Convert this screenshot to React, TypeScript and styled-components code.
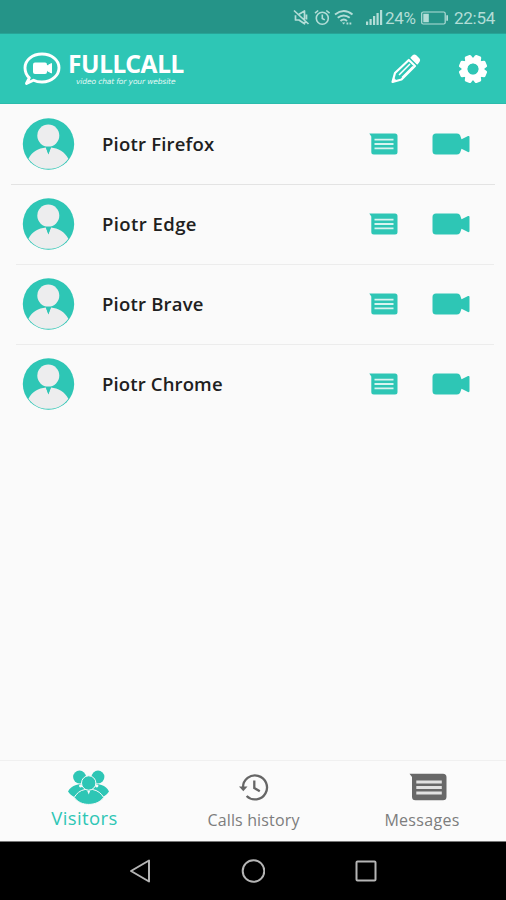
import React from "react";
import styled, { createGlobalStyle } from "styled-components";

const TEAL = "#2ec6b5";
const PAPER = "#fafafa";

const GlobalStyle = createGlobalStyle`
  * { box-sizing: border-box; }
  body { margin: 0; background: #000; }
  svg { display: block; flex: none; }
`;

const Screen = styled.div`
  display: flex;
  flex-direction: column;
  width: 506px;
  height: 900px;
  overflow: hidden;
  background: ${PAPER};
  font-family: "Open Sans", "Noto Sans", sans-serif;
`;

const StatusBar = styled.div`
  display: flex;
  align-items: center;
  height: 34px;
  padding: 2px 0 0 293px;
  background: #259488;
  color: #b3ddd7;
  border-bottom: 1px solid #27a497;
`;

const StatusItem = styled.span<{ $width: number }>`
  display: flex;
  width: ${(p) => p.$width}px;
  flex: none;
  font: 400 17px/20px Roboto, sans-serif;
  letter-spacing: -0.25px;
  white-space: nowrap;
`;

const Header = styled.header`
  display: flex;
  align-items: center;
  height: 70px;
  padding: 0 17px 0 22px;
  background: ${TEAL};
  border-bottom: 1px solid #2bbcac;
  color: #fff;
`;

const Brand = styled.div`
  display: flex;
  flex-direction: column;
  width: 130px;
  margin-left: 5px;
`;

const BrandName = styled.div`
  font: 700 24.5px/25px "Noto Sans", sans-serif;
  height: 25px;
  letter-spacing: -0.4px;
  white-space: nowrap;
`;

const Tagline = styled.div`
  padding-left: 8px;
  margin-top: 1px;
  font: italic 400 7.5px/9px "DejaVu Sans", sans-serif;
  letter-spacing: -0.12px;
  white-space: nowrap;
  color: #e4f9f6;
`;

const HeaderActions = styled.div`
  display: flex;
  align-items: center;
  gap: 36px;
  margin-left: auto;
`;

const VisitorList = styled.ul`
  flex: 1;
  margin: 0;
  padding: 0;
  list-style: none;
`;

const VisitorRow = styled.li`
  height: 80px;
  &:not(:last-child)::after {
    content: "";
    display: block;
    height: 1px;
    margin: 0 12px 0 16px;
    background: #ececec;
  }
  &:first-child::after {
    margin: 0 11px 0 11px;
    background: #e3e3e3;
  }
`;

const RowContent = styled.div`
  display: flex;
  align-items: center;
  height: 80px;
  padding: 0 36px 0 22px;
`;

const VisitorName = styled.div<{ $tracking: number }>`
  flex: 1;
  margin-left: 27px;
  color: #202020;
  font-weight: 600;
  font-size: 18.5px;
  line-height: 26px;
  letter-spacing: ${(p) => p.$tracking}px;
`;

const RowActions = styled.div`
  display: flex;
  align-items: center;
  gap: 34px;
`;

const TabBar = styled.nav`
  display: grid;
  grid-template-columns: 169px 169px 168px;
  height: 82px;
  background: #fbfbfb;
  border-top: 1px solid #f0f0f0;
  border-bottom: 1px solid #777;
`;

const Tab = styled.div<{ $active?: boolean }>`
  display: flex;
  flex-direction: column;
  align-items: center;
  color: ${(p) => (p.$active ? TEAL : "#666")};
`;

const TabIcon = styled.div<{ $indent?: number }>`
  display: flex;
  align-items: center;
  height: 36px;
  margin-top: 8px;
  padding-left: ${(p) => p.$indent ?? 0}px;
`;

const TabLabel = styled.div<{ $size: number; $tracking: number; $active?: boolean }>`
  font-size: ${(p) => p.$size}px;
  line-height: 24px;
  letter-spacing: ${(p) => p.$tracking}px;
  margin-top: ${(p) => (p.$active ? 1 : 3)}px;
  color: ${(p) => (p.$active ? TEAL : "#7d7d7d")};
  white-space: nowrap;
`;

const SystemNav = styled.div`
  display: grid;
  grid-template-columns: 22px 24px 22px;
  justify-content: center;
  align-items: center;
  column-gap: 90px;
  height: 58px;
  background: #000;
`;

const LogoMark = () => (
  <svg width="41" height="36" viewBox="0 0 41 36">
    <path d="M20 3C29.8 3 37 9.2 37 16.7S29.8 31 20 31c-3.200 0-6-.5-8.500-1.700L4.500 32.500l2.800-5.700C4.400 24.100 3 20.800 3 16.700 3 9.200 10.200 3 20 3z" fill="none" stroke="#fff" strokeWidth="2.900" strokeLinejoin="round" />
    <rect x="11" y="11.500" width="14" height="11.500" rx="2" fill="#fff" />
    <path d="M24 15.500l5.500-3v9.500l-5.500-3z" fill="#fff" stroke="#fff" strokeLinejoin="round" />
  </svg>
);

const PencilIcon = () => (
  <svg width="30" height="32" viewBox="0 0 30 32" fill="none" stroke="#fff" strokeLinejoin="round">
    <g transform="translate(0 .5)">
      <path d="M1.500 28.500l2.500-9L17.800 6.500l6.200 6L10.500 26z" strokeWidth="2.200" />
      <path d="M8 21.500L19 10.500M11 24L22 13" strokeWidth="1.500" />
      <path d="M20.200 4.200l2-2q1.300-1 2.600.2l3 2.800q1.100 1.200.2 2.600l-1.800 2.400z" fill="#fff" strokeWidth="1.500" />
      <path d="M1.500 28.500l1-4 3 2.900z" fill="#fff" />
    </g>
  </svg>
);

const GearIcon = () => (
  <svg width="32" height="32" viewBox="-16 -16 32 32">
    <g fill="#fff">
      {[0, 45, 90, 135, 180, 225, 270, 315].map((angle) => (
        <path key={angle} transform={`rotate(${angle + 22.5})`} d="M-4.700-8L-3.400-13.300q.4-1 1.400-1h4q1 0 1.400 1L4.700-8z" />
      ))}
    </g>
    <circle r="8.300" fill="none" stroke="#fff" strokeWidth="6" />
    <circle r="5.500" fill={TEAL} />
  </svg>
);

const Avatar = () => (
  <svg width="53" height="53" viewBox="0 0 53 53">
    <circle cx="26.500" cy="26" r="25.700" fill={TEAL} />
    <circle cx="26.300" cy="17.600" r="11" fill="#ededee" />
    <path d="M6.500 40.700C10 33.500 16.500 30.200 23.800 29.400l2.600 6.500 2.600-6.500c7 .8 14 4.300 17.300 11.300C42 47.300 34.800 50.800 26.500 50.800S11 47.300 6.500 40.700z" fill="#ededee" />
    <path d="M24 29.400h4.800l-1 3-1.400 4-1.400-4z" fill={TEAL} />
  </svg>
);

const MessageIcon = () => (
  <svg width="29" height="22" viewBox="0 0 29 22">
    <path d="M.3.500H26q2.500 0 2.500 2.500v16q0 2.500-2.500 2.500H4.800q-2.500 0-2.500-2.500V3.500z" fill={TEAL} />
    <path d="M5.500 6.600h19M5.500 11h19M5.500 15.400h19" stroke="#d8f4f0" strokeWidth="1.800" />
  </svg>
);

const VideoIcon = () => (
  <svg width="38" height="22" viewBox="0 0 38 22" fill={TEAL}>
    <path d="M4 .5h21q2.500 0 3.200 2l1.300 3.700L36 3q1.500-.5 1.500 1v14q0 1.500-1.500 1L29.500 15.800 28.200 19.500q-.7 2-3.200 2H4Q.5 21.500.5 18V4Q.5.500 4 .5z" />
  </svg>
);

const VisitorsIcon = () => (
  <svg width="43" height="35" viewBox="0 0 43 35" fill={TEAL}>
    <circle cx="12.500" cy="7" r="6.400" />
    <circle cx="31" cy="7" r="6.400" />
    <path d="M9 15l6-1.500h13.500l6 1.500c3.500 1 6 3.500 7.500 6.500-2.500 3.500-5.500 5.700-9.500 7L21.700 24l-11.200 4.500C6.500 27.200 3.500 25 1 21.500 2.500 18.500 5.500 16 9 15z" />
    <g stroke={PAPER} strokeWidth="1">
      <path d="M18 19.500h7.500c5 .8 9 4 11.200 8-3.500 4.700-9 6.900-15 6.900s-11-2.200-14.500-6.900c2.200-4 5.800-7.200 10.800-8z" />
      <circle cx="21.700" cy="13" r="7.200" />
    </g>
    <path d="M20.200 20.800h3l-1.500 3.700z" fill={PAPER} />
    <circle cx="13.600" cy="15.800" r="1.600" fill={PAPER} />
    <circle cx="29.800" cy="15.800" r="1.600" fill={PAPER} />
  </svg>
);

const HistoryIcon = () => (
  <svg width="30" height="28" viewBox="0 0 30 28" fill="none" stroke="#666" strokeWidth="2.300">
    <path d="M4 14.500a12 12 0 1 1 3.600 8.500" />
    <path d="M0 13.500h8.500l-4.200 4.700z" fill="#666" stroke="none" />
    <path d="M15.300 7.500v7.500l5.500 3.300" />
  </svg>
);

const MessagesTabIcon = () => (
  <svg width="38" height="28" viewBox="0 0 38 28">
    <path d="M.5.700H34q3.500 0 3.500 3.500v19.600q0 3.500-3.500 3.500H6.500Q3 27.300 3 23.800V4z" fill="#686868" />
    <path d="M7.300 9h25.500M7.300 14.500h25.500M7.300 20h25.500" stroke="#e2e2e2" strokeWidth="3" />
  </svg>
);

const MuteIcon = () => (
  <svg width="17" height="17" viewBox="0 0 17 17" fill="none" stroke="currentColor" strokeWidth="1.700" strokeLinejoin="round">
    <path d="M6 5.200L11.500 2v8.500M11.500 12.800v2L6 11H2.500V6.200M1 1.500l14.500 13.500M13.500 5.500v5" />
  </svg>
);

const AlarmIcon = () => (
  <svg width="17" height="17" viewBox="0 0 17 17" fill="none" stroke="currentColor" strokeWidth="1.600">
    <circle cx="8.300" cy="9.200" r="6" />
    <path d="M8.300 5.500v4l2.500 1.400M1 4.200l3.200-2.700M12.300 1.500l3.300 2.700" />
  </svg>
);

const WifiIcon = () => (
  <svg width="20" height="17" viewBox="0 0 20 17" fill="none" stroke="currentColor" strokeWidth="1.900">
    <path d="M1 5.500q8.800-7 17.500 0M3.700 8.800q6-4.800 12 0M6.500 12q3.300-2.800 6.500 0" />
    <path d="M8 13.500h3.300L9.600 15.500z" fill="currentColor" stroke="none" />
    <path d="M12.500 14.500h1.800M15.500 14.500h1.800" />
  </svg>
);

const SignalIcon = () => (
  <svg width="18" height="17" viewBox="0 0 18 17" fill="currentColor">
    <path d="M0 12.500h2.200V16H0zM3.500 10h2.200v6H3.500zM7 7h2.200v9H7zM10.500 4h2.200v12h-2.200zM14 1h2.200v15H14z" />
  </svg>
);

const BatteryIcon = () => (
  <svg width="28" height="16" viewBox="0 0 28 16">
    <rect x=".7" y="2" width="23.500" height="12" rx="1.500" fill="none" stroke="currentColor" strokeWidth="1.200" />
    <path d="M2.300 3.800h5.500v8.400H2.300zM25.300 5.300h1.700v5.400h-1.700z" fill="currentColor" />
  </svg>
);

const visitors = [
  { name: "Piotr Firefox", tracking: 0.2 },
  { name: "Piotr Edge", tracking: 0.42 },
  { name: "Piotr Brave", tracking: 0.2 },
  { name: "Piotr Chrome", tracking: 0.14 },
];

export default function App() {
  return (
    <Screen>
      <GlobalStyle />
      <StatusBar>
        <StatusItem $width={21}><MuteIcon /></StatusItem>
        <StatusItem $width={20}><AlarmIcon /></StatusItem>
        <StatusItem $width={32}><WifiIcon /></StatusItem>
        <StatusItem $width={19}><SignalIcon /></StatusItem>
        <StatusItem $width={36}>24%</StatusItem>
        <StatusItem $width={33}><BatteryIcon /></StatusItem>
        <StatusItem $width={44}>22:54</StatusItem>
      </StatusBar>
      <Header>
        <LogoMark />
        <Brand>
          <BrandName>FULLCALL</BrandName>
          <Tagline>video chat for your website</Tagline>
        </Brand>
        <HeaderActions>
          <PencilIcon />
          <GearIcon />
        </HeaderActions>
      </Header>
      <VisitorList>
        {visitors.map((v) => (
          <VisitorRow key={v.name}>
            <RowContent>
              <Avatar />
              <VisitorName $tracking={v.tracking}>{v.name}</VisitorName>
              <RowActions>
                <MessageIcon />
                <VideoIcon />
              </RowActions>
            </RowContent>
          </VisitorRow>
        ))}
      </VisitorList>
      <TabBar>
        <Tab $active>
          <TabIcon $indent={8}><VisitorsIcon /></TabIcon>
          <TabLabel $active $size={18.500} $tracking={0.4}>Visitors</TabLabel>
        </Tab>
        <Tab>
          <TabIcon><HistoryIcon /></TabIcon>
          <TabLabel $size={16} $tracking={0.15}>Calls history</TabLabel>
        </Tab>
        <Tab>
          <TabIcon $indent={11}><MessagesTabIcon /></TabIcon>
          <TabLabel $size={16} $tracking={0.3}>Messages</TabLabel>
        </Tab>
      </TabBar>
      <SystemNav>
        <svg width="22" height="26" viewBox="0 0 22 26">
          <path d="M20 2.500v21L2 13z" fill="none" stroke="#b5b5b5" strokeWidth="2" strokeLinejoin="round" />
        </svg>
        <svg width="24" height="24" viewBox="0 0 24 24">
          <circle cx="12.500" cy="12" r="10.800" fill="none" stroke="#b5b5b5" strokeWidth="2" />
        </svg>
        <svg width="22" height="22" viewBox="0 0 22 22">
          <rect x="1.500" y="1.500" width="19" height="19" rx="1" fill="none" stroke="#b5b5b5" strokeWidth="2" />
        </svg>
      </SystemNav>
    </Screen>
  );
}
